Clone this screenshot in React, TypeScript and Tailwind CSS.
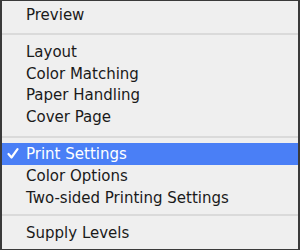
import React from 'react';

const Row = ({ label, selected = false, h = 'h-[21.5px]' }: { label: string; selected?: boolean; h?: string }) => (
    <div className={`${h} flex items-center relative pl-[24px] ${selected ? 'bg-[#4a7ff6] text-white' : 'text-[#1a1a1a]'}`}>
        {selected && (
            <svg className="absolute left-[5px] top-[5px]" width="12" height="11" viewBox="0 0 12 11" fill="none" stroke="white" strokeWidth="2.2" strokeLinecap="round" strokeLinejoin="round">
                <path d="M1.5 6 L4.5 9.5 L10.5 1.2" />
            </svg>
        )}
        <span>{label}</span>
    </div>
);

const Sep = ({ mt }: { mt: string }) => <div className={`${mt} h-[2px] bg-[#dadada]`} />;

export default function App() {
    return (
        <div
            className="w-[300px] h-[250px] bg-[#efefef] border-t border-l-2 border-r-2 border-b border-[#3a3a3a] text-[15px] leading-none overflow-hidden"
            style={{ fontFamily: '"DejaVu Sans", sans-serif' }}
        >
            <div className="pt-[4px]">
                <Row label="Preview" h="h-[21px]" />
            </div>
            <Sep mt="mt-[7px]" />
            <div className="mt-[7px]">
                <Row label="Layout" />
                <Row label="Color Matching" />
                <Row label="Paper Handling" />
                <Row label="Cover Page" />
            </div>
            <Sep mt="mt-[8px]" />
            <div className="mt-[5px]">
                <Row label="Print Settings" selected h="h-[22px]" />
                <Row label="Color Options" h="h-[22px]" />
                <Row label="Two-sided Printing Settings" h="h-[22px]" />
            </div>
            <Sep mt="mt-[5px]" />
            <div className="mt-[6px]">
                <Row label="Supply Levels" h="h-[22px]" />
            </div>
        </div>
    );
}
